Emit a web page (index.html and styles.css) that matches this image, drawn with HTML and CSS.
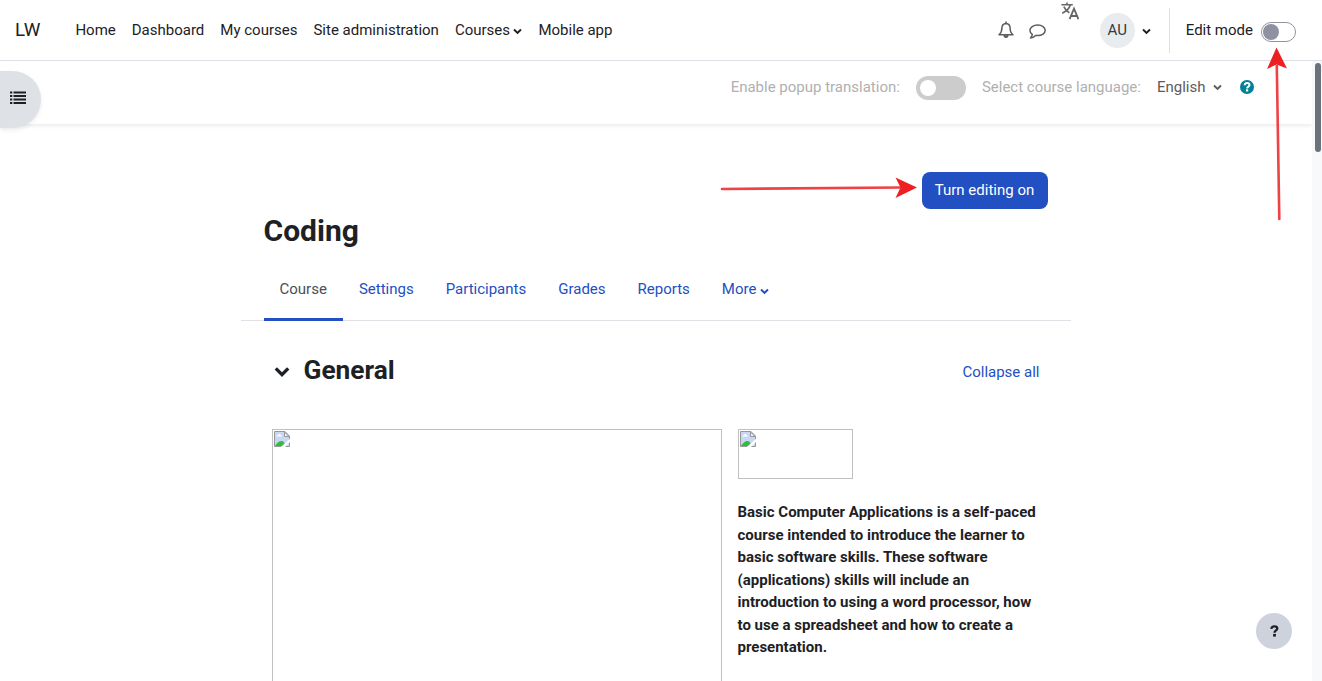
FILE: index.html
```html
<!DOCTYPE html>
<html lang="en">
<head>
<meta charset="utf-8">
<title>Coding</title>
<link rel="stylesheet" href="styles.css">
</head>
<body>
<svg class="defs" width="0" height="0">
  <symbol id="chevron" viewBox="0 0 8 6"><path d="M.9 1.200 4 4.300 7.100 1.200" fill="none" stroke="currentColor" stroke-width="1.700"/></symbol>
  <symbol id="broken" viewBox="0 0 16 16">
    <path d="M.5 15.500V.5H11L15.500 5V15.500Z" fill="#c9d7f7" stroke="#979797"/>
    <path d="M2.500 5.500c0-1.400 1.300-1.600 1.600-1.500.6-1.500 2.500-1 2.600.3 1.200-.1 1.300 1.200 1.300 1.200Z" fill="#fff"/>
    <path d="M1 15c1.500-3 4-5 6.500-5 2 0 3 1.500 4 5Z" fill="#32bd3b"/>
    <path d="M6.800 16 16 7.800V11L11 16Z" fill="#fff"/>
    <path d="M10.500 1V5.500H15Z" fill="#f4f4f4" stroke="#979797"/>
  </symbol>
</svg>

<header class="navbar">
  <a class="brand">LW</a>
  <nav class="primary">
    <a>Home</a><a>Dashboard</a><a>My courses</a><a>Site administration</a>
    <a>Courses<svg class="caret"><use href="#chevron"/></svg></a>
    <a>Mobile app</a>
  </nav>
  <div class="tools">
    <svg class="bell" viewBox="0 0 16 18" fill="none" stroke="#5c5c5c" stroke-width="1.500"><path d="M8 2.400C5 2.700 3.900 4.800 3.900 7c0 3.600-.9 5.300-2.900 6.800h14C13 12.300 12.100 10.600 12.100 7 12.100 4.800 11 2.700 8 2.400Z" stroke-linejoin="round"/><path d="M8 .6V2.500"/><path d="M6.200 14.200c0 1.200.7 2 1.800 2s1.800-.8 1.800-2" fill="#5c5c5c"/></svg>
    <svg class="comment" viewBox="0 0 17 16" fill="none" stroke="#5c5c5c" stroke-width="1.500"><path d="M8.700 1c4.200 0 7.500 2.300 7.500 5.300s-3.300 5.300-7.500 5.300c-.8 0-1.500-.1-2.200-.2-1.200 1.300-2.800 2.400-5 2.600.9-.9 1.600-2 1.800-3.600C1.800 9.400.9 8 .9 6.300.9 3.300 4.500 1 8.700 1Z" stroke-linejoin="round"/></svg>
    <svg class="translate" viewBox="0 0 18 18" fill="none" stroke="#666"><path d="M.4 2.800H11.800M6 .5V2.800M9.300 3C8.500 6 5 9.400 1.200 11.300M2.800 4.700C4 7.300 6 9.400 8.300 10.700" stroke-width="1.600"/><path d="M8.600 17.200 13 6.700 17.400 17.200M10.200 14H15.800" stroke-width="1.800"/></svg>
    <div class="user"><span class="avatar">AU</span><svg class="caret"><use href="#chevron"/></svg></div>
    <div class="edit-mode"><span>Edit mode</span><span class="edit-switch"></span></div>
  </div>
</header>

<div class="page">
  <main class="content">
    <div class="language-bar">
      <button class="drawer-toggle" aria-label="Open course index"><svg viewBox="0 0 16 13" fill="#1d2125"><path d="M0 .5H2.300V2.500H0ZM3.500 .5H16V2.500H3.500ZM0 4H2.300V6H0ZM3.500 4H16V6H3.500ZM0 7.500H2.300V9.500H0ZM3.500 7.500H16V9.500H3.500ZM0 11H2.300V13H0ZM3.500 11H16V13H3.500Z"/></svg></button>
      <span class="muted">Enable popup translation:</span>
      <span class="popup-switch"></span>
      <span class="muted">Select course language:</span>
      <span class="language">English<svg><use href="#chevron"/></svg></span>
      <svg class="help" viewBox="0 0 14 14"><circle cx="7" cy="7" r="7" fill="#008196"/><path d="M4.700 5.200C4.700 3.700 5.800 3.100 7.100 3.100s2.400.8 2.400 2C9.500 6.600 7.100 6.600 7.100 8.500" fill="none" stroke="#fff" stroke-width="2"/><path d="M6 9.300H8.200V11.500H6Z" fill="#fff"/></svg>
    </div>

    <div class="course">
      <div class="actions"><button class="primary-button">Turn editing on</button></div>
      <h1>Coding</h1>
      <nav class="tabs">
        <a class="active">Course</a><a>Settings</a><a>Participants</a><a>Grades</a><a>Reports</a><a>More<svg class="caret"><use href="#chevron"/></svg></a>
      </nav>
      <section>
        <div class="section-head">
          <svg><use href="#chevron"/></svg>
          <h2>General</h2>
          <a>Collapse all</a>
        </div>
        <div class="summary">
          <div class="image large"><svg><use href="#broken"/></svg></div>
          <div class="details">
            <div class="image small"><svg><use href="#broken"/></svg></div>
            <p>Basic Computer Applications is a self-paced course intended to introduce the learner to basic software skills. These software (applications) skills will include an introduction to using a word processor, how to use a spreadsheet and how to create a presentation.</p>
          </div>
        </div>
      </section>
    </div>
  </main>
  <div class="scroll-track"><div class="scroll-thumb"></div></div>
</div>

<button class="footer-help" aria-label="Help"><svg viewBox="0 0 9 12"><path d="M1.300 3.800C1.500 2.200 2.600 1.300 4.400 1.300c1.800 0 2.900.9 2.900 2.300C7.300 5.400 4.500 5.400 4.500 7.700" fill="none" stroke="#1d2125" stroke-width="2.300"/><path d="M3.100 8.900H5.900V11.600H3.100Z" fill="#1d2125"/></svg></button>

<svg class="annotations" viewBox="0 0 1322 681">
  <g fill="none" stroke="#ed2024" stroke-opacity=".85" stroke-width="2.600" stroke-linecap="round"><path d="M722 189 900 187.500"/><path d="M1279.300 219 1276.800 66"/></g>
  <path d="M917 187.500 895.500 177.500 900.500 187.500 895.500 198ZM1276.500 47.500 1267 69 1276.500 64.500 1287 68.500Z" fill="#ed2024"/>
</svg>
</body>
</html>
```

FILE: styles.css
```css
* { box-sizing: border-box; }
body {
  margin: 0;
  height: 681px;
  overflow: hidden;
  display: flex;
  flex-direction: column;
  font: 15px/22.5px Roboto, "Liberation Sans", sans-serif;
  color: #1d2125;
  background: #fff;
}
button { font: inherit; border: 0; padding: 0; }
svg { flex: none; display: block; }
.defs { position: absolute; }
.navbar {
  flex: none;
  height: 61px;
  display: flex;
  align-items: center;
  padding: 0 26px 0 15px;
  border-bottom: 1px solid #dee2e6;
}
.brand { width: 60.4px; font-size: 18.75px; }
.primary { display: flex; gap: 16px; }
.primary a { display: flex; align-items: center; }
.caret { width: 9px; height: 7px; margin: 3px 0 0 3.4px; }
.tools { display: flex; align-items: center; height: 60px; margin-left: auto; }
.bell { width: 16px; height: 18px; margin-right: 15px; }
.comment { width: 17px; height: 16px; margin: 3px 15px 0 0; }
.translate { width: 18px; height: 18px; margin: 2px 21px 0 0; align-self: flex-start; }
.user { display: flex; align-items: center; }
.avatar {
  width: 35px;
  height: 35px;
  border-radius: 50%;
  background: #e9ecef;
  color: #343a40;
  text-align: center;
  line-height: 35px;
}
.user .caret { margin: 2px 0 0 7.500px; }
.edit-mode {
  display: flex;
  align-items: center;
  gap: 8px;
  height: 45px;
  margin-left: 17.500px;
  padding-left: 16px;
  border-left: 1px solid #dee2e6;
}
.edit-switch {
  width: 35px;
  height: 20px;
  margin-top: 4px;
  padding: 1px;
  border: 1px solid #8f959e;
  border-radius: 10px;
}
.edit-switch::before {
  content: "";
  display: block;
  width: 16px;
  height: 16px;
  border-radius: 50%;
  background: #8f91a2;
}
.page { flex: 1; min-height: 0; display: flex; overflow: hidden; }
.content { flex: 1; min-width: 0; overflow: hidden; }
.language-bar {
  position: relative;
  display: flex;
  height: 63px;
  padding: 15px 58px 0 0;
  justify-content: flex-end;
  align-items: flex-start;
  box-shadow: 0 2px 4px rgba(0, 0, 0, .08);
}
.muted { color: #b0b0b0; }
.drawer-toggle {
  position: absolute;
  left: 0;
  top: 10px;
  width: 41px;
  height: 57px;
  padding-left: 10px;
  border-radius: 0 29px 29px 0;
  background: #dee2e6;
  box-shadow: 0 2px 4px rgba(0, 0, 0, .08);
}
.drawer-toggle svg { width: 16px; height: 13px; margin-top: -4px; }
.popup-switch {
  width: 50px;
  height: 24px;
  margin: 0 15.500px 0 16.500px;
  padding: 4px;
  border-radius: 12px;
  background: #ccc;
}
.popup-switch::before {
  content: "";
  display: block;
  width: 16px;
  height: 16px;
  border-radius: 50%;
  background: #fff;
}
.language { display: flex; align-items: center; margin: 0 18px 0 16px; color: #5c5c5c; }
.language svg { width: 9px; height: 7px; margin: 1px 0 0 7.500px; }
.help { width: 14px; height: 14px; margin-top: 4px; }
.course { width: 830px; margin-left: 241px; padding-top: 48px; }
.actions { display: flex; justify-content: flex-end; padding-right: 23px; }
.primary-button {
  height: 37px;
  width: 126px;
  padding-right: 1px;
  border-radius: 8px;
  color: #fff;
  background: #224fc2;
}
h1 { margin: 4px 0 0 22.500px; font-size: 30px; line-height: 36px; }
.tabs { display: flex; height: 60px; margin-top: 12px; padding-left: 22.500px; border-bottom: 1px solid #dee2e6; }
.tabs a { display: flex; align-items: center; height: 60px; padding: 0 16px 3px; color: #224fc2; }
.tabs .active { color: #495057; border-bottom: 3px solid #224fc2; padding-bottom: 0; }
.section-head { display: flex; align-items: center; height: 37px; margin-top: 31px; padding: 0 31.500px 0 33px; }
.section-head svg { width: 16px; height: 12px; margin-top: 3px; }
h2 { margin: -2px 0 0 13.500px; font-size: 26.250px; line-height: 32px; }
.section-head a { margin: 3px 0 0 auto; color: #224fc2; }
.summary { display: flex; gap: 15.500px; padding: 40px 31px 0; }
.image { border: 1px solid silver; padding: 1px; }
.image svg { width: 16px; height: 16px; }
.large { flex: none; width: 450px; height: 300px; }
.small { width: 115px; height: 50px; }
.details { flex: 1; }
.details p { margin: 22px 0 0; font-weight: 700; }
.scroll-track { flex: none; width: 10px; padding: 2px 1px 0 3px; background: #f8f9fa; }
.scroll-thumb { height: 89px; border-radius: 3px; background: #6a737b; }
.footer-help {
  position: absolute;
  right: 30px;
  bottom: 32px;
  width: 36px;
  height: 36px;
  display: grid;
  place-items: center;
  border-radius: 50%;
  background: #cdd2dc;
}
.footer-help svg { width: 9px; height: 12px; }
.annotations { position: absolute; inset: 0; width: 1322px; height: 681px; pointer-events: none; }
```
